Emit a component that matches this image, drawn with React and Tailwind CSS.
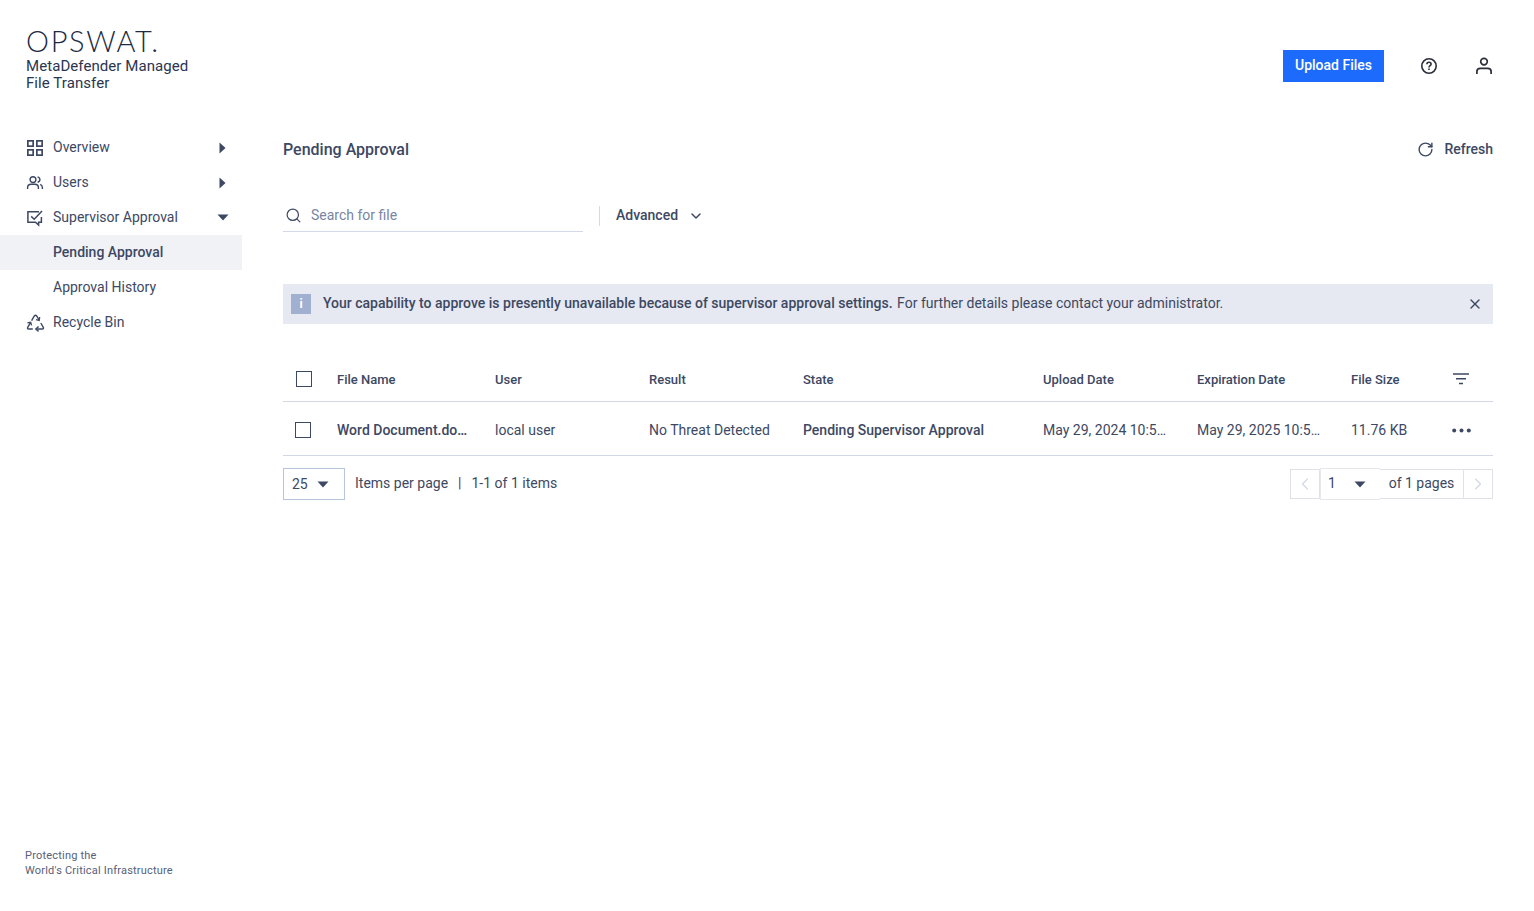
import React from "react";
import { ChevronDown, ChevronLeft, ChevronRight, RotateCw, Search, X } from "lucide-react";

const tableCols = "grid grid-cols-[54px_158px_154px_154px_240px_154px_154px_102px_40px] items-center";

function CaretRight() {
  return (
    <svg width="7" height="12" viewBox="0 0 7 12" className="text-[#3d4863]">
      <path d="M0.5 0.5 L6.5 6 L0.5 11.5 Z" fill="currentColor" />
    </svg>
  );
}

function CaretDown({ className = "" }) {
  return (
    <svg width="12" height="7" viewBox="0 0 12 7" className={className}>
      <path d="M0.5 0.5 H11.5 L6 6.5 Z" fill="#3d4863" />
    </svg>
  );
}

function GridIcon() {
  return (
    <svg width="18" height="18" viewBox="0 0 18 18" fill="none" stroke="#3d4863" strokeWidth="1.7">
      <rect x="1.85" y="1.85" width="5.3" height="5.3" />
      <rect x="10.85" y="1.85" width="5.3" height="5.3" />
      <rect x="1.85" y="10.85" width="5.3" height="5.3" />
      <rect x="10.85" y="10.85" width="5.3" height="5.3" />
    </svg>
  );
}

function UsersIcon() {
  return (
    <svg width="18" height="18" viewBox="0 0 18 18" fill="none" stroke="#3d4863" strokeWidth="1.4">
      <circle cx="7" cy="5.6" r="2.9" />
      <path d="M1.6 15 v-1.4 c0-2 1.6-3.4 3.6-3.4 h3.6 c2 0 3.6 1.4 3.6 3.4 V15" />
      <path d="M11.6 2.9 c1.4 0.3 2.3 1.4 2.3 2.7 s-0.9 2.4-2.3 2.7" />
      <path d="M14.2 10.4 c1.3 0.5 2.2 1.6 2.2 3.2 V15" />
    </svg>
  );
}

function ApprovalIcon() {
  return (
    <svg width="18" height="18" viewBox="0 0 18 18" fill="none" stroke="#3d4863" strokeWidth="1.5">
      <path d="M13 2.7 H1.9 V13.2 H9.5 L12.6 16 V13.2 H15.4 V8" />
      <path d="M5.2 7.4 L8.2 10.2 L16 2" />
    </svg>
  );
}

function RecycleIcon() {
  return (
    <svg width="19" height="19" viewBox="0 0 19 19" fill="none" stroke="#3d4863" strokeWidth="1.4">
      <path d="M5.6 7.6 L8.3 3 Q9.5 1.4 10.7 3 L13 7" />
      <path d="M13.6 4 L13.2 7.4 L10 6.6" />
      <path d="M4.6 9.4 L1.7 14.4 Q1 16 2.8 16 H6.8" />
      <path d="M1.4 9.9 L4.6 9.2 L5.6 12.4" />
      <path d="M10 16 H16.2 Q18 16 17.3 14.4 L14.8 10" />
      <path d="M12.6 13.4 L9.8 16 L12.6 18.4" />
    </svg>
  );
}

function HelpIcon() {
  return (
    <svg width="18" height="18" viewBox="0 0 18 18" fill="none" stroke="#2b2f3a" strokeWidth="1.6">
      <circle cx="9" cy="9" r="7.2" />
      <path d="M6.9 7.2 c0-1.2 0.9-2 2.1-2 s2.1 0.8 2.1 1.9 c0 1.6-2.1 1.6-2.1 3.3" />
      <path d="M9 11.6 V13" />
    </svg>
  );
}

function PersonIcon() {
  return (
    <svg width="18" height="18" viewBox="0 0 18 18" fill="none" stroke="#2b2f3a" strokeWidth="1.7">
      <circle cx="9" cy="4.6" r="3.3" />
      <path d="M1.9 17 v-2.4 c0-2 1.5-3.2 3.4-3.2 h7.4 c1.9 0 3.4 1.2 3.4 3.2 V17" />
    </svg>
  );
}

function FilterIcon() {
  return (
    <svg width="16" height="12" viewBox="0 0 16 12" fill="none" stroke="#3d4863" strokeWidth="1.5">
      <path d="M0 1 H16 M3 5.8 H13 M6 10.6 H10" />
    </svg>
  );
}

function Dots() {
  return (
    <svg width="19" height="5" viewBox="0 0 19 5" fill="#3d4863">
      <circle cx="2.2" cy="2.5" r="2" />
      <circle cx="9.5" cy="2.5" r="2" />
      <circle cx="16.8" cy="2.5" r="2" />
    </svg>
  );
}

function NavItem({ icon, label, caret, active }) {
  return (
    <div className={`flex h-[35px] items-center pl-[26px] pr-[13px] ${active ? "bg-[#f1f2f6] font-medium" : ""}`}>
      <span className="flex w-[27px] shrink-0 items-center">{icon}</span>
      <span className="flex-1 pb-[2px]">{label}</span>
      {caret}
    </div>
  );
}

function App() {
  return (
    <div className="flex h-[911px] w-[1534px] overflow-hidden bg-white text-sm text-[#3d4863] [font-family:Roboto,sans-serif]">
      <aside className="flex w-[242px] shrink-0 flex-col">
        <div className="h-[130px] pl-[26px] pt-[25px]">
          <div className="h-[33px] text-[29px] leading-[32px] font-light tracking-[1.7px] text-[#1d2a42] [font-family:Lato,sans-serif]">
            OPSWAT.
          </div>
          <div className="text-[15px] leading-[17px] tracking-[0.07px] text-[#2a3550]">
            MetaDefender Managed
            <br />
            File Transfer
          </div>
        </div>
        <nav className="flex-1">
          <NavItem
            icon={<GridIcon />}
            label="Overview"
            caret={<span className="mr-[3px]"><CaretRight /></span>}
          />
          <NavItem
            icon={<UsersIcon />}
            label="Users"
            caret={<span className="mr-[3px]"><CaretRight /></span>}
          />
          <NavItem icon={<ApprovalIcon />} label="Supervisor Approval" caret={<CaretDown />} />
          <NavItem label="Pending Approval" active />
          <NavItem label="Approval History" />
          <NavItem icon={<RecycleIcon />} label="Recycle Bin" />
        </nav>
        <div className="pb-[33px] pl-[25px] text-[11px] leading-[15px] tracking-[0.2px] text-[#566179]">
          Protecting the
          <br />
          World's Critical Infrastructure
        </div>
      </aside>

      <main className="flex min-w-0 flex-1 flex-col pl-[41px] pr-[41px]">
        <div className="flex h-[130px] items-center justify-end pt-[2px]">
          <button className="h-[32px] w-[101px] bg-[#1d6bfc] pb-[2px] font-medium text-white">Upload Files</button>
          <span className="ml-[36px]"><HelpIcon /></span>
          <span className="ml-[37px]"><PersonIcon /></span>
        </div>

        <div className="flex h-[39px] items-center justify-between">
          <h1 className="text-base font-medium">Pending Approval</h1>
          <div className="flex items-center gap-[10px] font-medium">
            <RotateCw size={17} strokeWidth={2} />
            <span className="pb-[2px]">Refresh</span>
          </div>
        </div>

        <div className="mt-[30px] flex h-[33px] items-center">
          <div className="flex h-[33px] w-[300px] items-center gap-[9px] border-b border-[#d3d9e6] pl-[2px]">
            <Search size={17} strokeWidth={1.7} />
            <span className="text-[#7a85a0]">Search for file</span>
          </div>
          <div className="ml-[16px] h-[20px] w-px bg-[#d3d9e6]" />
          <div className="ml-[16px] flex items-center gap-[10px] font-medium">
            <span className="pb-[2px]">Advanced</span>
            <ChevronDown size={16} strokeWidth={2.2} />
          </div>
        </div>

        <div className="mt-[52px] flex h-[40px] items-center bg-[#e6e9f1] pl-[8px] pr-[10px]">
          <span className="flex h-[20px] w-[20px] items-center justify-center bg-[#a1b0d0] text-xs font-bold text-white">i</span>
          <p className="ml-[12px] flex-1 pb-[2px]">
            <span className="mr-px font-medium">Your capability to approve is presently unavailable because of supervisor approval settings.</span>{" "}
            For further details please contact your administrator.
          </p>
          <X size={16} strokeWidth={2} />
        </div>

        <div className={`${tableCols} mt-[34px] h-[44px] border-b border-[#d3d7e3] pt-[2px] text-[13px] font-medium`}>
          <span className="mb-[4px] ml-[13px] h-[16px] w-[16px] border-[1.5px] border-[#3d4863]" />
          <span>File Name</span>
          <span>User</span>
          <span>Result</span>
          <span>State</span>
          <span>Upload Date</span>
          <span>Expiration Date</span>
          <span>File Size</span>
          <span className="mb-[4px]"><FilterIcon /></span>
        </div>

        <div className={`${tableCols} h-[54px] border-b border-[#d3d7e3] pt-[2px]`}>
          <span className="ml-[12px] h-[16px] w-[16px] border-[1.5px] border-[#3d4863]" />
          <span className="font-medium">Word Document.do…</span>
          <span>local user</span>
          <span>No Threat Detected</span>
          <span className="font-medium">Pending Supervisor Approval</span>
          <span>May 29, 2024 10:5…</span>
          <span>May 29, 2025 10:5…</span>
          <span>11.76 KB</span>
          <span className="-ml-px mt-[2px]"><Dots /></span>
        </div>

        <div className="mt-[12px] flex items-center justify-between">
          <div className="flex items-center">
            <div className="flex h-[32px] w-[62px] items-center gap-[9px] border border-[#b9c5dc] pl-[8px]">
              <span>25</span>
              <CaretDown />
            </div>
            <span className="ml-[10px] pb-[2px]">Items per page</span>
            <span className="mx-[10px] pb-[2px] text-[#6b1f6e]">|</span>
            <span className="pb-[2px]">1-1 of 1 items</span>
          </div>
          <div className="flex h-[32px] items-center">
            <div className="flex h-[30px] w-[30px] items-center justify-center border border-[#dfe1e6] text-[#d3d7e0]">
              <ChevronLeft size={20} strokeWidth={1.4} />
            </div>
            <div className="flex h-[32px] w-[60px] items-center justify-between border border-t-[#e6e7ea] border-r-0 border-b-[#e6e7ea] border-l-[#e6e7ea] pl-[7px] pr-[14px]">
              <span className="pb-[2px]">1</span>
              <CaretDown />
            </div>
            <div className="flex h-[30px] w-[83px] items-center justify-center border-y border-[#dfe1e6] pb-[2px]">of 1 pages</div>
            <div className="flex h-[30px] w-[30px] items-center justify-center border border-[#dfe1e6] text-[#d3d7e0]">
              <ChevronRight size={20} strokeWidth={1.4} />
            </div>
          </div>
        </div>
      </main>
    </div>
  );
}

export default App;
